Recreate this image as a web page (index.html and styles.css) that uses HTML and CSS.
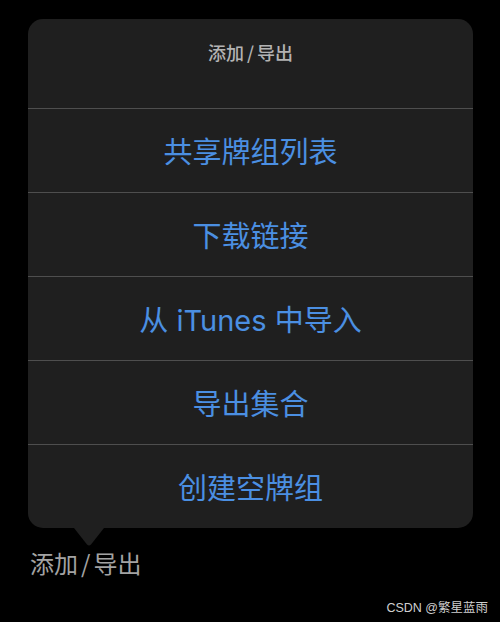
FILE: index.html
```html
<!DOCTYPE html>
<html lang="zh-CN">
<head>
<meta charset="utf-8">
<link rel="stylesheet" href="styles.css">
</head>
<body>
<div class="page">
  <div class="sheet">
    <div class="sheet-title">添加<span class="slash">/</span>导出</div>
    <div class="row">共享牌组列表</div>
    <div class="row">下载链接</div>
    <div class="row">从 iTunes 中导入</div>
    <div class="row">导出集合</div>
    <div class="row last">创建空牌组</div>
    <svg class="tail" width="30" height="19" viewBox="0 0 30 19"><path d="M0 0 L30 0 L17 16.5 Q15 18.5 13 16.5 Z" fill="#1f1f1f"/></svg>
  </div>
  <div class="anchor">添加<span class="slash">/</span>导出</div>
  <div class="watermark">CSDN @繁星蓝雨</div>
</div>
</body>
</html>
```
FILE: styles.css
```css
html, body {
  margin: 0;
  padding: 0;
  background: #000;
}
body {
  width: 500px;
  height: 622px;
  overflow: hidden;
  font-family: Inter, "Noto Sans CJK SC", sans-serif;
}
.page {
  position: relative;
  width: 500px;
  height: 622px;
  padding-top: 19px;
  box-sizing: border-box;
}
.sheet {
  position: relative;
  margin-left: 28px;
  width: 445px;
  background: #1f1f1f;
  border-radius: 15px;
}
.sheet-title {
  height: 89px;
  box-sizing: border-box;
  padding-top: 23px;
  text-align: center;
  font-size: 18px;
  line-height: 20px;
  font-weight: 500;
  color: #b3b3b3;
  font-family: "Noto Sans CJK SC", sans-serif;
}
.sheet-title .slash {
  padding: 0 3px;
}
.row {
  height: 84px;
  box-sizing: border-box;
  border-top: 1px solid #4e4e4e;
  display: flex;
  align-items: center;
  justify-content: center;
  font-size: 29px;
  color: #4b8fe2;
  padding-bottom: 1px;
}
.tail {
  position: absolute;
  left: 46px;
  top: 100%;
  display: block;
}
.anchor {
  margin-top: 20px;
  margin-left: 30px;
  font-size: 24px;
  line-height: 30px;
  color: #a3a3a3;
  font-family: "Noto Sans CJK SC", sans-serif;
}
.anchor .slash {
  padding: 0 3px;
}
.watermark {
  position: absolute;
  right: 12px;
  bottom: 6px;
  font-size: 12.5px;
  line-height: 16px;
  color: #cfcfcf;
  font-family: "Liberation Sans", "Noto Sans CJK SC", sans-serif;
}
```
